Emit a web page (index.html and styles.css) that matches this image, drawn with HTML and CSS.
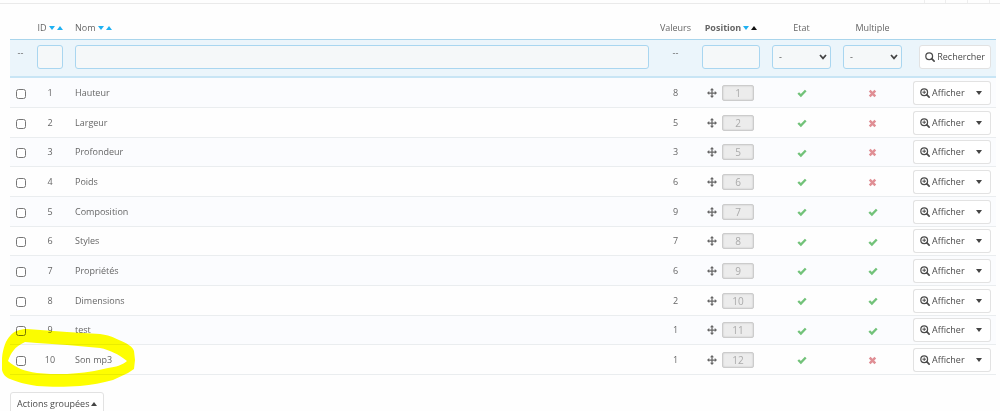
FILE: index.html
```html
<!DOCTYPE html>
<html lang="fr">
<head>
    <meta charset="UTF-8">
    <meta name="viewport" content="width=device-width, initial-scale=1.0">
    <title>Caractéristiques</title>
    <link rel="stylesheet" href="styles.css">
</head>
<body>
    <svg class="symbols" aria-hidden="true">
        <symbol id="icon-search" viewBox="0 0 16 16">
            <circle cx="6.7" cy="6.7" r="5.4" fill="none" stroke="currentColor" stroke-width="2"/>
            <path d="M10.7 10.7L14.6 14.6" stroke="currentColor" stroke-width="2.6" stroke-linecap="round"/>
        </symbol>
        <symbol id="icon-zoom" viewBox="0 0 16 16">
            <circle cx="6.7" cy="6.7" r="5.4" fill="none" stroke="currentColor" stroke-width="2"/>
            <path d="M10.7 10.7L14.6 14.6" stroke="currentColor" stroke-width="2.6" stroke-linecap="round"/>
            <path d="M6.7 3.8V9.6M3.8 6.7H9.6" stroke="currentColor" stroke-width="1.5"/>
        </symbol>
        <symbol id="icon-move" viewBox="0 0 16 16">
            <path d="M8 2V14M2 8H14" stroke="currentColor" stroke-width="2"/>
            <path d="M8 0L11.2 3.6H4.8ZM8 16L4.8 12.4H11.2ZM0 8L3.6 4.8V11.2ZM16 8L12.4 11.2V4.8Z" fill="currentColor"/>
        </symbol>
        <symbol id="icon-check" viewBox="0 0 16 16">
            <path d="M2 8L6.2 12L14 4" fill="none" stroke="currentColor" stroke-width="3.8"/>
        </symbol>
        <symbol id="icon-cross" viewBox="0 0 16 16">
            <path d="M3 3L13 13M13 3L3 13" stroke="currentColor" stroke-width="4.4"/>
        </symbol>
    </svg>

    <div class="toolbar"><span></span><span></span><span></span></div>

    <form class="panel" onsubmit="event.preventDefault()">
        <table class="features">
            <colgroup>
                <col class="col-check">
                <col class="col-id">
                <col>
                <col class="col-values">
                <col class="col-position">
                <col class="col-state">
                <col class="col-state">
                <col class="col-actions">
            </colgroup>
            <thead>
                <tr class="titles">
                    <th></th>
                    <th>ID<a href="#" class="down" aria-label="ID décroissant"></a><a href="#" class="up" aria-label="ID croissant"></a></th>
                    <th class="name">Nom<a href="#" class="down" aria-label="Nom décroissant"></a><a href="#" class="up" aria-label="Nom croissant"></a></th>
                    <th>Valeurs</th>
                    <th class="sorted">Position<a href="#" class="down" aria-label="Position décroissante"></a><a href="#" class="up active" aria-label="Position croissante"></a></th>
                    <th>Etat</th>
                    <th>Multiple</th>
                    <th></th>
                </tr>
                <tr class="filters">
                    <td class="none">--</td>
                    <td><input type="text" aria-label="ID"></td>
                    <td><input type="text" aria-label="Nom"></td>
                    <td class="none">--</td>
                    <td><input type="text" aria-label="Position"></td>
                    <td><select aria-label="Etat"><option>-</option><option>Oui</option><option>Non</option></select></td>
                    <td><select aria-label="Multiple"><option>-</option><option>Oui</option><option>Non</option></select></td>
                    <td class="actions"><button type="submit" class="btn search"><svg class="icon"><use href="#icon-search"/></svg>Rechercher</button></td>
                </tr>
            </thead>
            <tbody id="rows"></tbody>
        </table>

        <button type="button" class="btn bulk">Actions groupées<span class="caret-up"></span></button>
    </form>

    <svg class="marker" viewBox="0 0 140 70" aria-hidden="true">
        <path fill-rule="evenodd" d="M2 38C3 28 6 20 10 16C14 11 20 9 27 9L67 12L100 14C108 15 113 17 119 20C127 23 133 27 134 31L135 40L134 49L128 53L113 60C102 63 92 65 80 66C66 67 50 67 37 66C25 64 17 62 10 59C5 57 3 54 2 50Z
            M8 41C11 33 14 27 25 22L37 23L67 25L100 28C110 30 118 34 127 41C122 45 116 47 108 48C96 51 84 53 67 54C54 54 46 54 37 53C24 51 16 48 8 41Z"/>
    </svg>

    <script>
        const features = [
            { id: 1, name: 'Hauteur', values: 8, position: 1, multiple: false },
            { id: 2, name: 'Largeur', values: 5, position: 2, multiple: false },
            { id: 3, name: 'Profondeur', values: 3, position: 5, multiple: false },
            { id: 4, name: 'Poids', values: 6, position: 6, multiple: false },
            { id: 5, name: 'Composition', values: 9, position: 7, multiple: true },
            { id: 6, name: 'Styles', values: 7, position: 8, multiple: true },
            { id: 7, name: 'Propriétés', values: 6, position: 9, multiple: true },
            { id: 8, name: 'Dimensions', values: 2, position: 10, multiple: true },
            { id: 9, name: 'test', values: 1, position: 11, multiple: true },
            { id: 10, name: 'Son mp3', values: 1, position: 12, multiple: false }
        ];

        function stateIcon(on) {
            const name = on ? 'check' : 'cross';
            return `<svg class="icon ${name}"><use href="#icon-${name}"/></svg>`;
        }

        document.getElementById('rows').innerHTML = features.map(f => `
            <tr>
                <td class="select"><input type="checkbox" aria-label="${f.name}"></td>
                <td>${f.id}</td>
                <td class="name">${f.name}</td>
                <td>${f.values}</td>
                <td><div class="drag"><svg class="icon"><use href="#icon-move"/></svg><span class="position">${f.position}</span></div></td>
                <td>${stateIcon(true)}</td>
                <td>${stateIcon(f.multiple)}</td>
                <td class="actions">
                    <div class="group">
                        <button type="button" class="btn view"><svg class="icon"><use href="#icon-zoom"/></svg>Afficher</button>
                        <button type="button" class="btn toggle" aria-label="Plus d'actions"><span class="caret"></span></button>
                    </div>
                </td>
            </tr>`).join('');
    </script>
</body>
</html>
```

FILE: styles.css
```css
* {
    box-sizing: border-box;
}

body {
    position: relative;
    margin: 0;
    background-color: #fefefe;
    color: #666;
    font-family: "Open Sans", sans-serif;
    font-size: 9px;
    line-height: 12px;
    overflow: hidden;
}

.symbols {
    display: none;
}

.toolbar {
    display: flex;
    justify-content: flex-end;
    height: 4px;
    padding-right: 10px;
    border-bottom: 1px solid #eaeaea;
}

.toolbar span {
    width: 22px;
    border-right: 1px solid #eee;
}

.toolbar span:first-child {
    border-left: 1px solid #eee;
}

.panel {
    padding: 12px 4px 0 10px;
}

.features {
    width: 100%;
    table-layout: fixed;
    border-collapse: separate;
    border-spacing: 0;
}

.col-check { width: 21px; }
.col-id { width: 38px; }
.col-values { width: 41px; }
.col-position { width: 70px; }
.col-state { width: 71px; }
.col-actions { width: 88px; }

th, td {
    padding: 0 6px;
    text-align: center;
    vertical-align: middle;
    white-space: nowrap;
}

th {
    height: 23px;
    padding: 0;
    font-weight: normal;
}

.name {
    padding-left: 6px;
    text-align: left;
}

.sorted {
    font-weight: bold;
}

.up, .down {
    display: inline-block;
    margin-left: 2px;
    border: 3px solid transparent;
    vertical-align: 1px;
}

.down {
    border-top: 4px solid #1fb1f2;
    border-bottom: 0;
}

.up {
    border-bottom: 4px solid #1fb1f2;
    border-top: 0;
}

.up.active {
    border-bottom-color: #111;
}

.filters td {
    height: 39px;
    padding-bottom: 2px;
    border-top: 1px solid #a9d5ec;
    border-bottom: 2px solid #c8e5f5;
    background-color: #ebf5fb;
}

.filters .none {
    padding-bottom: 10px;
}

.filters input, .filters select {
    display: block;
    width: 100%;
    height: 24px;
    padding: 0 4px;
    border: 1px solid #a9d6f0;
    border-radius: 3px;
    background-color: #f5f8f9;
    color: #555;
    font: inherit;
}

.filters select {
    padding: 0 6px;
    appearance: none;
    background-image: url("data:image/svg+xml,%3Csvg xmlns='http://www.w3.org/2000/svg' viewBox='0 0 8 6'%3E%3Cpath d='M1 1L4 4.4L7 1' fill='none' stroke='%23444' stroke-width='1.7'/%3E%3C/svg%3E");
    background-position: right 3px center;
    background-repeat: no-repeat;
    background-size: 8px 6px;
}

tbody td {
    height: 30px;
    border-bottom: 1px solid #eaedef;
}

tbody tr:nth-child(3n) td {
    height: 29px;
}

tbody tr:nth-child(odd) {
    background-color: #fbfcfe;
}

.select input {
    display: block;
    width: 10px;
    height: 10px;
    margin: 2px 0 0;
}

.icon {
    width: 10px;
    height: 10px;
    vertical-align: middle;
}

.check {
    color: #72c279;
}

.cross {
    width: 9px;
    height: 9px;
    color: #e08f95;
}

.drag {
    display: flex;
    align-items: center;
    gap: 5px;
    padding-left: 5px;
}

.position {
    width: 32px;
    height: 16px;
    border: 1px solid #ccc;
    border-radius: 2px;
    background-color: #ececec;
    box-shadow: inset 0 0 2px rgba(0, 0, 0, 0.2);
    color: #aaa;
    font-size: 10px;
    line-height: 14px;
}

.btn {
    display: inline-flex;
    align-items: center;
    height: 24px;
    border: 1px solid #e2e2e2;
    border-radius: 3px;
    background-color: #fff;
    color: #4a4a4a;
    font: inherit;
    cursor: pointer;
}

.btn:hover {
    background-color: #f5f8f9;
}

.actions {
    padding: 0 5px;
    text-align: right;
}

.search {
    gap: 2px;
    padding: 0 5px;
}

.group {
    display: flex;
}

.view {
    flex: 1;
    gap: 2px;
    padding: 0 0 0 6px;
    border-right: 0;
    border-radius: 3px 0 0 3px;
}

.toggle {
    width: 23px;
    justify-content: center;
    padding: 0;
    border-left: 0;
    border-radius: 0 3px 3px 0;
}

.caret {
    border: 3px solid transparent;
    border-top: 4px solid #444;
    border-bottom: 0;
}

.bulk {
    gap: 2px;
    margin-top: 17px;
    padding: 0 6px;
}

.caret-up {
    border: 3px solid transparent;
    border-bottom: 4px solid #444;
    border-top: 0;
}

/* highlighter stroke over the last row */
.marker {
    position: absolute;
    top: 320px;
    left: 0;
    width: 140px;
    height: 70px;
    fill: #ff0;
    mix-blend-mode: multiply;
    pointer-events: none;
}
```
